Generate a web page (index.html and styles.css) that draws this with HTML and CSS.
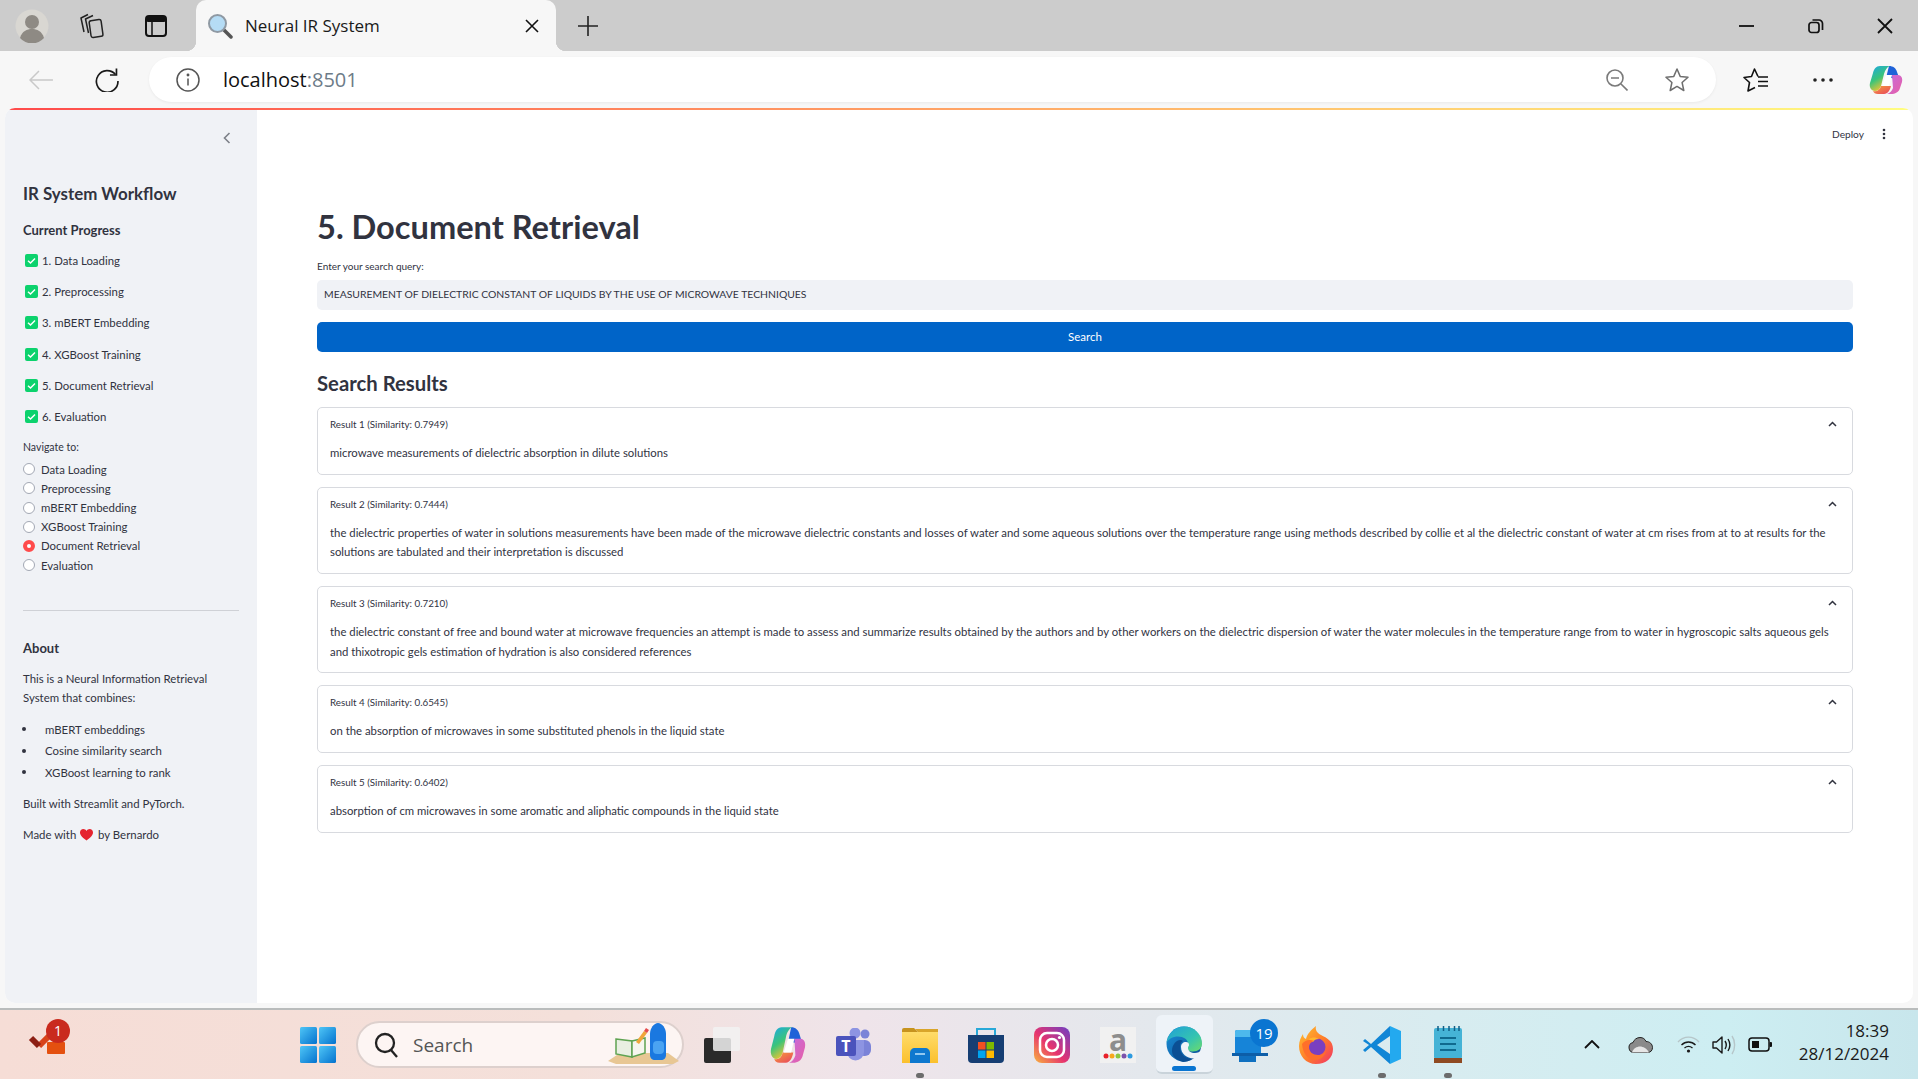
FILE: index.html
```html
<!DOCTYPE html>
<html lang="en">
<head>
  <meta charset="UTF-8">
  <meta name="viewport" content="width=device-width, initial-scale=1.0">
  <title>Neural IR System</title>
  <link rel="stylesheet" href="styles.css">
</head>
<body>
  <svg class="defs" width="0" height="0">
    <defs>
      <linearGradient id="copilotA" x1="0" y1="0" x2=".5" y2="1"><stop offset="0" stop-color="#1aa7e8"/><stop offset=".55" stop-color="#3bc47a"/><stop offset="1" stop-color="#f6c42e"/></linearGradient>
      <linearGradient id="copilotB" x1="0" y1="0" x2="1" y2="1"><stop offset="0" stop-color="#c46be0"/><stop offset="1" stop-color="#e85fa5"/></linearGradient>
      <linearGradient id="copilotC" x1="0" y1="0" x2="1" y2="1"><stop offset="0" stop-color="#f6a13a"/><stop offset="1" stop-color="#e8435f"/></linearGradient>
      <linearGradient id="winG" x1="0" y1="0" x2="1" y2="1"><stop offset="0" stop-color="#4fc6f7"/><stop offset="1" stop-color="#0472ce"/></linearGradient>
      <linearGradient id="edgeG" x1="0" y1="0" x2="1" y2="1"><stop offset="0" stop-color="#1f9fd8"/><stop offset=".6" stop-color="#35c4b0"/><stop offset="1" stop-color="#6ddc6a"/></linearGradient>
      <linearGradient id="edgeB" x1="0" y1="0" x2="1" y2="1"><stop offset="0" stop-color="#1a8fd8"/><stop offset="1" stop-color="#0b4f94"/></linearGradient>
      <linearGradient id="instaG" x1="0" y1="1" x2="1" y2="0"><stop offset="0" stop-color="#f9b43c"/><stop offset=".45" stop-color="#e6336f"/><stop offset="1" stop-color="#6d3fc4"/></linearGradient>
      <linearGradient id="foxG" x1="0" y1="0" x2="1" y2="1"><stop offset="0" stop-color="#ffc22e"/><stop offset=".55" stop-color="#ff7a2a"/><stop offset="1" stop-color="#f0326a"/></linearGradient>
      <linearGradient id="folderG" x1="0" y1="0" x2="0" y2="1"><stop offset="0" stop-color="#ffdc6a"/><stop offset="1" stop-color="#fbc02d"/></linearGradient>
      <symbol id="copilot" viewBox="0 0 34 30">
        <path d="M20 1c4 0 7 2 8 6l4 11-9-5h-6z" fill="#1f62d8"/>
        <path d="M11 1h10c-3 1-5 4-6 8l-3 12c-1 3-3 5-6 5-4 0-6-4-5-8l3-10c1-4 3-7 7-7z" fill="url(#copilotA)"/>
        <path d="M23 10h6c3 0 5 3 4 7l-2 6c-1 4-5 6-9 6h-4c3-1 5-3 6-6z" fill="url(#copilotB)"/>
        <path d="M12 21h10c-1 4-3 8-7 8H9c-3 0-4-1-5-3 4 1 7-1 8-5z" fill="url(#copilotC)"/>
        <path d="M17 10h6l-3 11h-7z" fill="#fff"/>
      </symbol>
    </defs>
  </svg>

  <div class="tabbar">
    <svg class="tb-avatar" width="34" height="34" viewBox="0 0 34 34"><circle cx="17" cy="17" r="16.500" fill="#d9d7d2"/><circle cx="17" cy="13" r="7" fill="#8e8a84"/><path d="M5 29c2-7 7-9 12-9s10 2 12 9a16 16 0 0 1-24 0z" fill="#8e8a84"/></svg>
    <svg class="tb-collections" width="26" height="26" viewBox="0 0 26 26" fill="none" stroke="#222" stroke-width="1.500" stroke-linejoin="round"><path d="M9 1.500 2 5l3 14"/><path d="M14 2.500 6.500 6l3 14"/><rect x="11" y="7" width="12" height="17" rx="2" transform="rotate(-8 17 15)" fill="#ccc"/></svg>
    <svg class="tb-layout" width="22" height="22" viewBox="0 0 22 22"><rect x="1" y="1" width="20" height="20" rx="3" fill="none" stroke="#111" stroke-width="2"/><rect x="1" y="1" width="20" height="6" rx="2" fill="#111"/><path d="M7 7v14" stroke="#111" stroke-width="1.500"/></svg>
    <div class="tab">
      <svg width="26" height="26" viewBox="0 0 26 26"><path d="m16 16 8 8" stroke="#555" stroke-width="3.500" stroke-linecap="round"/><circle cx="10.500" cy="10.500" r="8.500" fill="#b5dcf5" stroke="#8f99a3" stroke-width="2"/></svg>
      <span class="tab-title">Neural IR System</span>
      <svg width="14" height="14" viewBox="0 0 14 14" stroke="#111" stroke-width="1.600"><path d="m1 1 12 12M13 1 1 13"/></svg>
    </div>
    <svg class="tb-plus" width="20" height="20" viewBox="0 0 20 20" stroke="#222" stroke-width="1.600"><path d="M10 0v20M0 10h20"/></svg>
    <div class="win-btns">
      <svg width="16" height="16" viewBox="0 0 16 16" stroke="#111" stroke-width="1.800"><path d="M0 8h15"/></svg>
      <svg width="16" height="16" viewBox="0 0 16 16" fill="none" stroke="#111" stroke-width="1.700"><rect x="1" y="4.500" width="10" height="10" rx="2.500"/><path d="M4.500 2h6.500a3.500 3.500 0 0 1 3.500 3.500V12"/></svg>
      <svg width="16" height="16" viewBox="0 0 16 16" stroke="#111" stroke-width="1.800"><path d="m1 1 14 14M15 1 1 15"/></svg>
    </div>
  </div>

  <div class="toolbar">
    <svg class="tl-back" width="24" height="20" viewBox="0 0 24 20" fill="none" stroke="#c9c9c9" stroke-width="1.500"><path d="M24 10H1M10 1l-9 9 9 9"/></svg>
    <svg class="tl-reload" width="24" height="24" viewBox="0 0 24 24" fill="none" stroke="#1a1a1a" stroke-width="1.700"><path d="M20.500 6.500A10.800 10.800 0 1 0 23 13"/><path d="M21.500 0.500v6.500H15"/></svg>
    <div class="address">
      <svg width="24" height="24" viewBox="0 0 24 24" fill="none" stroke="#555" stroke-width="1.500"><circle cx="12" cy="12" r="11"/><path d="M12 10.500v7"/><circle cx="12" cy="7" r=".7" fill="#555"/></svg>
      <span class="url">localhost<span class="port">:8501</span></span>
      <svg class="zoom-out" width="22" height="22" viewBox="0 0 22 22" fill="none" stroke="#7a7a7a" stroke-width="1.600"><circle cx="9" cy="9" r="8"/><path d="M5 9h8M15 15l6.500 6.500"/></svg>
      <svg class="fav" width="24" height="24" viewBox="0 0 24 24" fill="none" stroke="#6e6e6e" stroke-width="1.500" stroke-linejoin="round"><path d="m12 1 3.200 7.400 7.800.8-5.900 5.300 1.700 8L12 18.400 5.200 22.500l1.700-8L1 9.200l7.800-.8z"/></svg>
    </div>
    <div class="tl-right">
      <svg width="26" height="24" viewBox="0 0 26 24" fill="none" stroke="#111" stroke-width="1.600" stroke-linejoin="round"><path d="M15 8.500 11.500 1l-3 7.500L1 9.500l5.500 5L5 23l7-3.500"/><path d="M15 9h10M15 13.500h10M15 18h10"/></svg>
      <svg class="dots" width="20" height="4" viewBox="0 0 20 4" fill="#222"><circle cx="2" cy="2" r="1.800"/><circle cx="10" cy="2" r="1.800"/><circle cx="18" cy="2" r="1.800"/></svg>
      <svg class="tl-copilot" width="34" height="30" viewBox="0 0 34 30"><use href="#copilot"/></svg>
    </div>
  </div>

  <div class="page">
    <aside class="sidebar">
      <div class="collapse"><svg width="8" height="12" viewBox="0 0 8 12" fill="none" stroke="#7d8088" stroke-width="1.600"><path d="M6.500 1 1.500 6l5 5"/></svg></div>
      <h2 class="side-title">IR System Workflow</h2>
      <h4 class="side-head">Current Progress</h4>
      <ul class="checks">
        <li><svg class="check" viewBox="0 0 13 13"><rect width="13" height="13" rx="2" fill="#0cd26d"/><path d="m3 6.800 2.500 2.200L10 4.500" fill="none" stroke="#fff" stroke-width="1.500"/></svg>1. Data Loading</li>
        <li><svg class="check" viewBox="0 0 13 13"><rect width="13" height="13" rx="2" fill="#0cd26d"/><path d="m3 6.800 2.500 2.200L10 4.500" fill="none" stroke="#fff" stroke-width="1.500"/></svg>2. Preprocessing</li>
        <li><svg class="check" viewBox="0 0 13 13"><rect width="13" height="13" rx="2" fill="#0cd26d"/><path d="m3 6.800 2.500 2.200L10 4.500" fill="none" stroke="#fff" stroke-width="1.500"/></svg>3. mBERT Embedding</li>
        <li><svg class="check" viewBox="0 0 13 13"><rect width="13" height="13" rx="2" fill="#0cd26d"/><path d="m3 6.800 2.500 2.200L10 4.500" fill="none" stroke="#fff" stroke-width="1.500"/></svg>4. XGBoost Training</li>
        <li><svg class="check" viewBox="0 0 13 13"><rect width="13" height="13" rx="2" fill="#0cd26d"/><path d="m3 6.800 2.500 2.200L10 4.500" fill="none" stroke="#fff" stroke-width="1.500"/></svg>5. Document Retrieval</li>
        <li><svg class="check" viewBox="0 0 13 13"><rect width="13" height="13" rx="2" fill="#0cd26d"/><path d="m3 6.800 2.500 2.200L10 4.500" fill="none" stroke="#fff" stroke-width="1.500"/></svg>6. Evaluation</li>
      </ul>
      <div class="nav-label">Navigate to:</div>
      <ul class="radios">
        <li><span class="radio"></span>Data Loading</li>
        <li><span class="radio"></span>Preprocessing</li>
        <li><span class="radio"></span>mBERT Embedding</li>
        <li><span class="radio"></span>XGBoost Training</li>
        <li><span class="radio on"></span>Document Retrieval</li>
        <li><span class="radio"></span>Evaluation</li>
      </ul>
      <hr class="side-rule">
      <h4 class="about-head">About</h4>
      <p class="about-text">This is a Neural Information Retrieval<br>System that combines:</p>
      <ul class="about-list">
        <li>mBERT embeddings</li>
        <li>Cosine similarity search</li>
        <li>XGBoost learning to rank</li>
      </ul>
      <p class="about-text built">Built with Streamlit and PyTorch.</p>
      <p class="about-text made">Made with <svg class="heart" width="13" height="12" viewBox="0 0 13 12"><path d="M6.500 11.500C2 8.300 0 6 0 3.500 0 1.500 1.500 0 3.300 0c1.300 0 2.500.7 3.200 1.900C7.200.7 8.400 0 9.700 0 11.500 0 13 1.500 13 3.500c0 2.500-2 4.800-6.500 8z" fill="#e5242f"/></svg> by Bernardo</p>
    </aside>

    <main class="main">
      <div class="top-actions">
        <span class="deploy">Deploy</span>
        <svg class="kebab" width="4" height="12" viewBox="0 0 4 12" fill="#31333f"><circle cx="2" cy="2" r="1.300"/><circle cx="2" cy="6" r="1.300"/><circle cx="2" cy="10" r="1.300"/></svg>
      </div>
      <h1 class="title">5. Document Retrieval</h1>
      <label class="query-label" for="query">Enter your search query:</label>
      <input class="query" id="query" type="text" value="MEASUREMENT OF DIELECTRIC CONSTANT OF LIQUIDS BY THE USE OF MICROWAVE TECHNIQUES">
      <button class="search-btn" type="button">Search</button>
      <h3 class="results-title">Search Results</h3>
      <div class="results">
        <section class="result">
          <div class="result-head"><span>Result 1 (Similarity: 0.7949)</span><svg width="9" height="6" viewBox="0 0 9 6" fill="none" stroke="#31333f" stroke-width="1.500"><path d="m1 5 3.500-3.500L8 5"/></svg></div>
          <p>microwave measurements of dielectric absorption in dilute solutions</p>
        </section>
        <section class="result">
          <div class="result-head"><span>Result 2 (Similarity: 0.7444)</span><svg width="9" height="6" viewBox="0 0 9 6" fill="none" stroke="#31333f" stroke-width="1.500"><path d="m1 5 3.500-3.500L8 5"/></svg></div>
          <p>the dielectric properties of water in solutions measurements have been made of the microwave dielectric constants and losses of water and some aqueous solutions over the temperature range using methods described by collie et al the dielectric constant of water at cm rises from at to at results for the<br>solutions are tabulated and their interpretation is discussed</p>
        </section>
        <section class="result">
          <div class="result-head"><span>Result 3 (Similarity: 0.7210)</span><svg width="9" height="6" viewBox="0 0 9 6" fill="none" stroke="#31333f" stroke-width="1.500"><path d="m1 5 3.500-3.500L8 5"/></svg></div>
          <p>the dielectric constant of free and bound water at microwave frequencies an attempt is made to assess and summarize results obtained by the authors and by other workers on the dielectric dispersion of water the water molecules in the temperature range from to water in hygroscopic salts aqueous gels<br>and thixotropic gels estimation of hydration is also considered references</p>
        </section>
        <section class="result">
          <div class="result-head"><span>Result 4 (Similarity: 0.6545)</span><svg width="9" height="6" viewBox="0 0 9 6" fill="none" stroke="#31333f" stroke-width="1.500"><path d="m1 5 3.500-3.500L8 5"/></svg></div>
          <p>on the absorption of microwaves in some substituted phenols in the liquid state</p>
        </section>
        <section class="result">
          <div class="result-head"><span>Result 5 (Similarity: 0.6402)</span><svg width="9" height="6" viewBox="0 0 9 6" fill="none" stroke="#31333f" stroke-width="1.500"><path d="m1 5 3.500-3.500L8 5"/></svg></div>
          <p>absorption of cm microwaves in some aromatic and aliphatic compounds in the liquid state</p>
        </section>
      </div>
    </main>
  </div>

  <footer class="taskbar">
    <div class="todo">
      <svg width="38" height="24" viewBox="0 0 38 24"><rect x="19" y="11" width="18" height="12" rx="1" fill="#e4500f"/><path d="M11 15 21 5" stroke="#d8431a" stroke-width="6"/><path d="m3 7 8 8" stroke="#8c1f14" stroke-width="6"/></svg>
      <span class="todo-badge">1</span>
    </div>
    <svg class="start" width="36" height="36" viewBox="0 0 36 36"><rect width="17" height="17" rx="1.500" fill="url(#winG)"/><rect x="19" width="17" height="17" rx="1.500" fill="url(#winG)"/><rect y="19" width="17" height="17" rx="1.500" fill="url(#winG)"/><rect x="19" y="19" width="17" height="17" rx="1.500" fill="url(#winG)"/></svg>
    <div class="task-search">
      <svg width="24" height="26" viewBox="0 0 24 26" fill="none" stroke="#222" stroke-width="2.300"><circle cx="11" cy="11" r="9"/><path d="m17 18 6 7"/></svg>
      <span class="task-search-text">Search</span>
      <svg class="search-art" width="72" height="42" viewBox="0 0 72 42"><path d="M0 39 12 31h48l11 8-6 3H8z" fill="#e8c794"/><path d="M8 17l16 2v16l-16-3z" fill="#e9efe2" stroke="#5fa352" stroke-width="1.500"/><path d="M24 19l13-3v15l-13 4z" fill="#f6f6ee" stroke="#5fa352" stroke-width="1.500"/><path d="m28 20 8-11 3 2-8 11z" fill="#f0a63a"/><path d="m36 9 2-3 3 2-2 3z" fill="#e44d4d"/><path d="M42 12c0-6 4-11 8-11s8 5 8 11v21c0 3-2 5-5 5h-6c-3 0-5-2-5-5z" fill="#1a78e0"/><rect x="45" y="19" width="11" height="13" rx="4" fill="#4aa3f2"/></svg>
    </div>
    <div class="task-apps">
      <div class="app">
        <svg width="36" height="36" viewBox="0 0 36 36"><rect x="0" y="11" width="27" height="25" rx="2" fill="#2a2a2a"/><rect x="9" y="0" width="27" height="24" rx="2" fill="#f2f2f2" fill-opacity=".85"/></svg>
      </div>
      <div class="app">
        <svg width="36" height="38" viewBox="0 0 34 30" preserveAspectRatio="none"><use href="#copilot"/></svg>
      </div>
      <div class="app">
        <svg width="36" height="34" viewBox="0 0 36 34"><circle cx="29" cy="6" r="4.500" fill="#7b83d8"/><rect x="22" y="12" width="13" height="16" rx="6" fill="#7b83d8"/><circle cx="19" cy="5" r="5.500" fill="#8d94e2"/><path d="M11 12h17v12a8.500 8.500 0 0 1-17 0z" fill="#8d94e2"/><rect x="0" y="8" width="20" height="20" rx="2" fill="#4b53bc"/><text class="teams-t" x="10" y="24" text-anchor="middle">T</text></svg>
      </div>
      <div class="app">
        <svg width="36" height="36" viewBox="0 0 36 36"><path d="M0 3a2 2 0 0 1 2-2h10l4 4h-16z" fill="#c7931e"/><path d="M0 5h36v31H0z" fill="url(#folderG)"/><path d="M0 5h16l-3-3H36v3" fill="#d9a52a"/><path d="M8 36v-10c0-3 2-5 5-5h10c3 0 5 2 5 5v10z" fill="#0e78cf"/><path d="M13 27h10" stroke="#bfe3fb" stroke-width="1.500"/></svg>
        <span class="run-dot"></span>
      </div>
      <div class="app">
        <svg width="36" height="36" viewBox="0 0 36 36"><path d="M9 5V2h18v3M9 2v8M27 2v8" fill="none" stroke="#28a8d8" stroke-width="2"/><path d="M0 8h36v24a4 4 0 0 1-4 4H4a4 4 0 0 1-4-4z" fill="#163e73"/><rect x="10" y="15" width="7.500" height="7.500" fill="#f25022"/><rect x="18.500" y="15" width="7.500" height="7.500" fill="#7fba00"/><rect x="10" y="23.500" width="7.500" height="7.500" fill="#00a4ef"/><rect x="18.500" y="23.500" width="7.500" height="7.500" fill="#ffb900"/></svg>
      </div>
      <div class="app">
        <svg width="36" height="36" viewBox="0 0 36 36"><rect width="36" height="36" rx="8" fill="url(#instaG)"/><rect x="6" y="6" width="24" height="24" rx="7" fill="none" stroke="#fff" stroke-width="2.500"/><circle cx="18" cy="18" r="6" fill="none" stroke="#fff" stroke-width="2.500"/><circle cx="25.500" cy="10.500" r="1.600" fill="#fff"/></svg>
      </div>
      <div class="app">
        <div class="amazon">
          <span class="amazon-a">a</span>
          <svg width="30" height="8" viewBox="0 0 30 8"><circle cx="3" cy="4" r="2.500" fill="#e8212a"/><circle cx="9" cy="4" r="2.500" fill="#f7a81b"/><circle cx="15" cy="4" r="2.500" fill="#8cc63f"/><circle cx="21" cy="4" r="2.500" fill="#7b52ab"/><circle cx="27" cy="4" r="2.500" fill="#2c9ae0"/></svg>
        </div>
      </div>
      <div class="app active">
        <svg width="38" height="36" viewBox="0 0 38 36"><circle cx="19" cy="18" r="17.500" fill="url(#edgeB)"/><path d="M1.500 17C3 7 10 .5 19 .5 29 .5 37 8 37 17.500c0 5-4 8-9 8-4 0-6.500-1.500-6.500-3.500 0-1 1.500-2 1.500-4.500 0-4-4.500-7-10-7C7.500 10.500 3.500 13 1.500 17z" fill="url(#edgeG)"/><path d="M16 21c0-3 2-5 5-5 2 0 3 1 3 3 0 1-1 1.500-1 3 0 3 3 5 7 5 2.500 0 5-1 7-3-1 3-3 6-5 8-8 2-16-3-16-11z" fill="#eef3f8"/><path d="M7 25C7 17 14 12 18 15c-2 1-3 3-3 6 0 7 5 12 12 12-3 2-6 3-9 3C12 34 7 31 7 25z" fill="#0b4f94"/></svg>
        <span class="active-bar"></span>
      </div>
      <div class="app">
        <div class="widgets">
          <svg width="36" height="34" viewBox="0 0 36 34"><path d="M3 4a2 2 0 0 1 2-2h24v24H3z" fill="#1684d8"/><path d="M3 4a2 2 0 0 1 2-2h14v7H3z" fill="#4db8ec"/><rect x="0" y="25" width="36" height="3" fill="#0d5ea8"/><rect x="7" y="28" width="17" height="6" fill="#0f70c0"/></svg>
          <span class="widgets-badge">19</span>
        </div>
      </div>
      <div class="app">
        <svg width="34" height="38" viewBox="0 0 34 38"><path d="M17 38C7 38 0 30 0 20c0-5 2-9 4-12 0 3 1 4 3 5 1-5 5-9 10-13-1 4 1 7 5 9 6 3 12 6 12 14 0 9-7 15-17 15z" fill="url(#foxG)"/><circle cx="18" cy="21" r="8.500" fill="#7a3fc0"/><path d="M10 13c3-2 7-2 10 0-3 0-5 1-6 3-2 0-3-1-4-3z" fill="#ffb52e"/><path d="M3 18c3-4 8-5 12-3-3 1-5 3-5 6 0 5 4 8 9 8 4 0 7-2 8-5 0 5-5 10-11 10C9 34 4 28 3 18z" fill="#ff6f2a"/></svg>
      </div>
      <div class="app">
        <svg width="38" height="38" viewBox="0 0 38 38"><path d="M27 0 8 18l-6-5-2 2 6 4-6 5 2 2 6-5 19 17V28L14 19l13-9z" fill="#1186d6"/><path d="M27 0 38 5v28l-11 5z" fill="#23a9ef"/></svg>
        <span class="run-dot"></span>
      </div>
      <div class="app">
        <svg width="28" height="37" viewBox="0 0 28 37"><rect y="2" width="28" height="31" rx="2" fill="#45b3d6"/><path d="M4 0v5M9.500 0v5M15 0v5M20.500 0v5M25 0v5" stroke="#105f86" stroke-width="1.500"/><path d="M6 12h16M6 18h16M6 24h16" stroke="#0f6a8f" stroke-width="2"/><rect y="32" width="28" height="5" fill="#8f4a22"/></svg>
        <span class="run-dot"></span>
      </div>
    </div>
    <div class="tray">
      <svg class="tray-caret" width="16" height="9" viewBox="0 0 16 9" fill="none" stroke="#111" stroke-width="1.800"><path d="m1 8 7-7 7 7"/></svg>
      <svg class="tray-cloud" width="25" height="16" viewBox="0 0 25 16"><path d="M6 15.500a5 5 0 0 1-1-9.900C6 2.500 9 .5 12 .5c3 0 5 1.500 6 4 3.500 0 6.500 2.500 6.500 6 0 3-2 5-5 5z" fill="#8a8a8a" stroke="#222"/><path d="M4 15.500c1-4 5-6 8-6s7 2 9 6z" fill="#e6e6e6"/></svg>
      <svg class="tray-wifi" width="23" height="17" viewBox="0 0 23 17" fill="none" stroke-width="1.400"><path d="M1 6c6-6.500 15-6.500 21 0" stroke="#b6c6c9"/><path d="M4.500 9c4-4 10-4 14 0M7.500 12c2.500-2 5.500-2 8 0" stroke="#1a1a1a"/><circle cx="11.500" cy="15" r="1.600" fill="#1a1a1a"/></svg>
      <svg class="tray-sound" width="24" height="20" viewBox="0 0 24 20" fill="none" stroke="#1a1a1a" stroke-width="1.400"><path d="M1 7v6h3.500L10 18V2L4.500 7z" stroke-linejoin="round"/><path d="M13 6c1.600 2.500 1.600 5.500 0 8M16 4c2.500 4 2.500 8 0 12"/><path d="M20 1c3.500 5 3.500 13 0 18" stroke="#b6c6c9"/></svg>
      <svg class="tray-batt" width="24" height="15" viewBox="0 0 24 15"><rect x="1" y="1" width="20" height="13" rx="3" fill="none" stroke="#111" stroke-width="1.500"/><rect x="4" y="4" width="7" height="7" fill="#111"/><rect x="21.500" y="5" width="2.500" height="5" rx="1" fill="#111"/></svg>
      <div class="clock"><span>18:39</span><span>28/12/2024</span></div>
    </div>
  </footer>
</body>
</html>
```
FILE: styles.css
```css
* {
  box-sizing: border-box;
}

html, body {
  height: 100%;
}

body {
  margin: 0;
  width: 1918px;
  height: 1079px;
  display: flex;
  flex-direction: column;
  overflow: hidden;
  background: #f7f7f7;
  font-family: Lato, "Noto Sans", sans-serif;
  color: #31333f;
}

ul {
  list-style: none;
  margin: 0;
  padding: 0;
}

p, h1, h2, h3, h4 {
  margin: 0;
}

.defs {
  position: absolute;
}

/* browser chrome */
.tabbar {
  height: 51px;
  flex: none;
  display: flex;
  align-items: center;
  background: #cccccc;
  padding-left: 15px;
}

.tb-collections { margin-left: 30px; }
.tb-layout { margin-left: 40px; }

.tab {
  width: 360px;
  height: 51px;
  margin-left: 29px;
  padding: 0 17px 0 11px;
  display: flex;
  align-items: center;
  background: #f7f7f7;
  border-radius: 10px 10px 0 0;
  position: relative;
}

.tab::before, .tab::after {
  content: "";
  position: absolute;
  bottom: 0;
  width: 10px;
  height: 10px;
}

.tab::before {
  left: -10px;
  background: radial-gradient(circle at 0 0, #cccccc 10px, #f7f7f7 10.500px);
}

.tab::after {
  right: -10px;
  background: radial-gradient(circle at 100% 0, #cccccc 10px, #f7f7f7 10.500px);
}

.tab-title {
  flex: 1;
  margin-left: 12px;
  font-family: "Open Sans", sans-serif;
  font-size: 17px;
  color: #1a1a1a;
}

.tb-plus { margin-left: 22px; }

.win-btns {
  margin-left: auto;
  margin-right: 25px;
  display: flex;
  gap: 53px;
}

.toolbar {
  height: 57px;
  flex: none;
  display: flex;
  align-items: center;
  padding: 0 15px 0 29px;
}

.tl-reload { margin-left: 42px; }

.address {
  width: 1570px;
  height: 45px;
  margin-left: 30px;
  padding: 0 27px 0 27px;
  display: flex;
  align-items: center;
  background: #fff;
  border-radius: 23px;
  box-shadow: 0 1px 3px rgba(0, 0, 0, .06);
}

.url {
  flex: 1;
  margin-left: 23px;
  font-family: "Open Sans", sans-serif;
  font-size: 20px;
  color: #111;
}

.port { color: #6d7b88; }
.zoom-out { margin-right: 37px; }

.tl-right {
  margin-left: 27px;
  display: flex;
  align-items: center;
}

.dots { margin-left: 44px; }
.tl-copilot { margin-left: 36px; }

/* streamlit page */
.page {
  height: 895px;
  flex: none;
  margin: 0 5px 0 5px;
  display: flex;
  overflow: hidden;
  background: #fff;
  border-radius: 10px;
  position: relative;
}

.page::before {
  content: "";
  position: absolute;
  left: 0;
  right: 0;
  top: 0;
  height: 2px;
  background: linear-gradient(90deg, #ff4b4b, #fffd80);
}

.sidebar {
  width: 252px;
  flex: none;
  padding: 2px 18px 0 18px;
  background: #f0f2f6;
  font-size: 11.400px;
}

.collapse {
  height: 56px;
  display: flex;
  align-items: center;
  justify-content: flex-end;
  padding-right: 8px;
}

.side-title {
  margin-top: 14px;
  font-size: 16.900px;
  line-height: 28px;
  font-weight: 700;
}

.side-head {
  margin-top: 12px;
  font-size: 13px;
  line-height: 20px;
  font-weight: 700;
}

.checks {
  margin-top: 5px;
}

.checks li {
  height: 31.200px;
  display: flex;
  align-items: center;
}

.check {
  width: 13px;
  height: 13px;
  margin: 0 4px 0 2px;
}

.nav-label {
  margin-top: 6.500px;
  font-size: 10.500px;
  line-height: 16px;
}

.radios {
  margin-top: 5px;
}

.radios li {
  height: 19.200px;
  display: flex;
  align-items: center;
}

.radio {
  width: 12px;
  height: 12px;
  border-radius: 50%;
  border: 1px solid #a3a8b4;
  background: #fff;
  margin-right: 6px;
}

.radio.on {
  border: 4px solid #ff4b4b;
}

.side-rule {
  height: 1px;
  margin: 35.500px 0 0;
  border: 0;
  background: #cfd1d6;
}

.about-head {
  margin-top: 27px;
  font-size: 13px;
  line-height: 20px;
  font-weight: 700;
}

.about-text {
  margin-top: 11px;
  line-height: 19px;
}

.about-list {
  margin-top: 11px;
}

.about-list li {
  height: 21.500px;
  display: flex;
  align-items: center;
  margin-left: -1px;
}

.about-list li::before {
  content: "";
  width: 4px;
  height: 4px;
  margin-right: 19px;
  border-radius: 50%;
  background: #31333f;
}

.built { margin-top: 11px; }
.made { margin-top: 12px; }

.heart {
  margin: 0 2px 0 1px;
  vertical-align: -2px;
}

.main {
  flex: 1;
  padding: 0 60px;
  min-width: 0;
}

.top-actions {
  height: 52px;
  padding: 0 21px 0 0;
  margin-right: -54px;
  display: flex;
  align-items: center;
  justify-content: flex-end;
  gap: 18px;
}

.deploy {
  font-size: 10.200px;
}

.title {
  margin-top: 45px;
  font-size: 32.600px;
  line-height: 44px;
  font-weight: 700;
}

.query-label {
  display: block;
  margin-top: 9px;
  font-size: 10px;
  line-height: 16px;
}

.query {
  display: block;
  width: 100%;
  height: 30px;
  margin-top: 6px;
  padding: 0 7px 2px;
  border: 0;
  border-radius: 5px;
  background: #f0f2f6;
  font: 10.400px Lato, "Noto Sans", sans-serif;
  color: #31333f;
}

.search-btn {
  display: block;
  width: 100%;
  height: 30px;
  margin-top: 12px;
  padding: 0 0 2px;
  border: 0;
  border-radius: 5px;
  background: #0064c8;
  color: #fff;
  font: 11.500px Lato, "Noto Sans", sans-serif;
}

.results-title {
  margin-top: 15.500px;
  font-size: 20.300px;
  line-height: 30px;
  font-weight: 700;
}

.results {
  margin-top: 9.500px;
  display: flex;
  flex-direction: column;
  gap: 12.300px;
}

.result {
  padding: 7px 12px 11px;
  border: 1px solid #d8dadf;
  border-radius: 5px;
  font-size: 11.350px;
}

.result-head {
  height: 18px;
  display: flex;
  align-items: center;
  justify-content: space-between;
  padding-right: 3px;
  font-size: 9.800px;
}

.result p {
  margin-top: 10px;
  line-height: 19.500px;
}

/* windows taskbar */
.taskbar {
  height: 71px;
  flex: none;
  margin-top: 5px;
  display: flex;
  align-items: center;
  border-top: 2px solid #b9bcbc;
  background: linear-gradient(90deg, #f6ddd6 0%, #f4e0da 30%, #efe4ea 45%, #d8ecf0 75%, #cdeef2 90%, #c8e6ec 100%);
}

.todo {
  width: 300px;
  height: 24px;
  flex: none;
  padding-left: 28px;
  position: relative;
}

.todo svg {
  display: block;
  margin-top: -2px;
}

.todo-badge {
  position: absolute;
  left: 46px;
  top: -14px;
  width: 24px;
  height: 24px;
  display: flex;
  align-items: center;
  justify-content: center;
  border-radius: 50%;
  background: #c92a1e;
  color: #fff;
  font: 14px "Open Sans", sans-serif;
}

.task-search {
  width: 328px;
  height: 47px;
  margin-left: 20px;
  padding-left: 16px;
  display: flex;
  align-items: center;
  background: #fdf5f3;
  border: 2px solid #ddd0cd;
  border-radius: 24px;
  position: relative;
}

.task-search-text {
  margin-left: 15px;
  font-family: "Open Sans", sans-serif;
  font-size: 19px;
  color: #555;
}

.search-art {
  position: absolute;
  right: 2px;
  bottom: 2px;
}

.task-apps {
  margin-left: 5px;
  display: flex;
}

.app {
  width: 66px;
  height: 59px;
  display: flex;
  align-items: center;
  justify-content: center;
  border-radius: 6px;
  position: relative;
}

.app.active {
  width: 57px;
  margin: 0 4.500px;
  background: #eef3f8;
  border-bottom: 2px solid #c9d3da;
}

.run-dot {
  position: absolute;
  left: 29px;
  bottom: -4px;
  width: 8px;
  height: 5px;
  border-radius: 3px;
  background: #6c6c6c;
}

.active-bar {
  position: absolute;
  left: 16px;
  bottom: 1px;
  width: 24px;
  height: 5px;
  border-radius: 3px;
  background: #0a75d1;
}

.teams-t {
  font: 700 16px "Open Sans", sans-serif;
  fill: #fff;
}

.amazon {
  width: 36px;
  height: 36px;
  display: flex;
  flex-direction: column;
  align-items: center;
  background: #f1f1f1;
}

.amazon-a {
  font: 700 30px/25px "Open Sans", sans-serif;
  color: #8d8d8d;
}

.widgets {
  position: relative;
  width: 36px;
  height: 34px;
}

.widgets-badge {
  position: absolute;
  left: 18px;
  top: -9px;
  width: 28px;
  height: 28px;
  display: flex;
  align-items: center;
  justify-content: center;
  border-radius: 50%;
  background: #0a75d1;
  color: #fff;
  font: 15px "Open Sans", sans-serif;
}

.tray {
  flex: 1;
  padding-right: 29px;
  display: flex;
  align-items: center;
}

.tray-caret { margin-left: 103px; }
.tray-cloud { margin-left: 28px; }
.tray-wifi { margin-left: 24px; }
.tray-sound { margin-left: 12px; }
.tray-batt { margin-left: 12px; }

.clock {
  margin-left: auto;
  padding-bottom: 5px;
  display: flex;
  flex-direction: column;
  align-items: flex-end;
  font-family: "Open Sans", sans-serif;
  font-size: 17px;
  line-height: 23px;
  color: #1a1a1a;
}
```
